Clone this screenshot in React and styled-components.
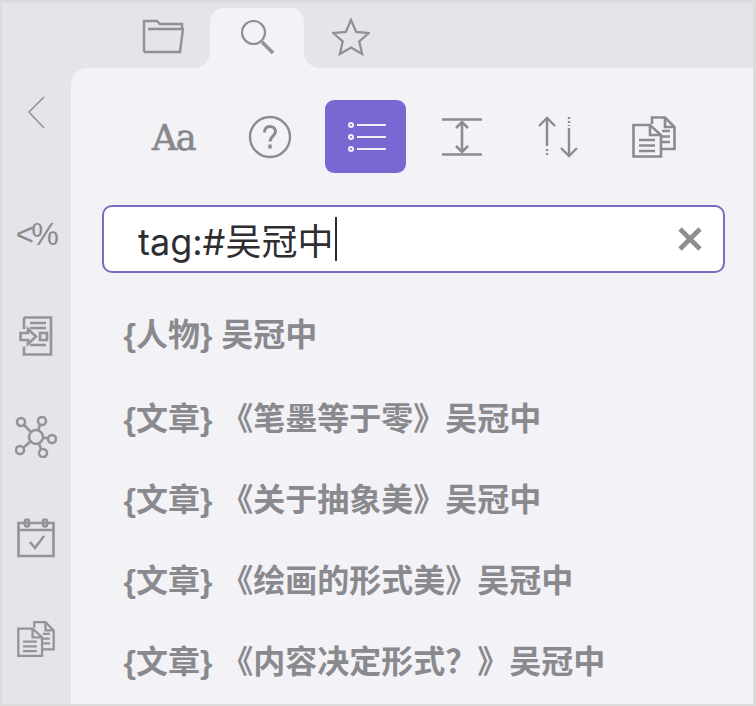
import React from 'react'
import styled, { createGlobalStyle } from 'styled-components'

const results = [
  '{人物} 吴冠中',
  '{文章} 《笔墨等于零》吴冠中',
  '{文章} 《关于抽象美》吴冠中',
  '{文章} 《绘画的形式美》吴冠中',
  '{文章} 《内容决定形式？》吴冠中',
]

function CopyIcon({ width, height }) {
  return (
    <Icon width={width} height={height} viewBox="0 0 44 42" $stroke={2.6}>
      <path d="M20 8V1.500h13l9.500 9.500v22H30" />
      <path d="M33 1.500V11h9.500" />
      <path d="M30 15h8M30 20.500h8M30 26h8" />
      <path d="M1.500 9H18l11 10v21.500H1.500z" />
      <path d="M18 9v10h11" />
      <path d="M7 24h16M7 29.500h16M7 35h16" />
    </Icon>
  )
}

function App() {
  return (
    <>
      <GlobalStyle />
      <Frame>
        <TabBar>
          <Tab>
            <Icon width="42" height="36" viewBox="0 0 42 36" $stroke={2.4}>
              <path d="M2 34V3h13l3 3h22v5" />
              <path d="M2 34h36l3-23H6" />
            </Icon>
          </Tab>
          <Tab $active>
            <Icon width="36" height="38" viewBox="0 0 36 38" $stroke={2.2}>
              <circle cx="14.500" cy="14.500" r="11.500" />
              <path d="M23 24l11 11" strokeWidth="3.600" />
            </Icon>
          </Tab>
          <Tab>
            <Icon width="38" height="38" viewBox="0 0 40 40" $stroke={2.4}>
              <path d="M20 2l5.400 12.600 13.400 1.200-10.100 8.900 3 13.200L20 31l-11.700 6.900 3-13.200L1.200 15.800l13.400-1.200z" />
            </Icon>
          </Tab>
        </TabBar>
        <Main>
          <Side>
            <SideSlot $gapBelow={21}>
              <Icon width="18" height="33" viewBox="0 0 18 33" $stroke={1.600}>
                <path d="M17 1L2 16l15 16" />
              </Icon>
            </SideSlot>
            <SideSlot><Percent>&lt;%</Percent></SideSlot>
            <SideSlot>
              <Icon width="34" height="40" viewBox="0 0 34 40" $stroke={2.600}>
                <path d="M5 1.500h27v37H5v-8M5 1.500V13" />
                <path d="M11 7h16M11 12h16M11 29h16" />
                <path d="M1.500 17H9v-4l8 7.500-8 7.500v-4H1.500z" />
                <rect x="21" y="17" width="7" height="7" />
              </Icon>
            </SideSlot>
            <SideSlot>
              <Icon width="42" height="42" viewBox="0 0 42 42" $stroke={2.600}>
                <circle cx="21" cy="21" r="7" />
                <circle cx="6" cy="6" r="4" />
                <circle cx="27" cy="5" r="4" />
                <circle cx="37" cy="23" r="4" />
                <circle cx="5" cy="34" r="4" />
                <circle cx="28" cy="37" r="4" />
                <path d="M9 9l7 7M25 9l-2 5.500M28 22h5M8.500 31.500l7-6M26 33l-2-5.500" />
              </Icon>
            </SideSlot>
            <SideSlot>
              <Icon width="38" height="40" viewBox="0 0 38 40" $stroke={2.600}>
                <path d="M1.500 5h35v33h-35zM1.500 12h35" />
                <rect x="8" y="1.500" width="4" height="7" rx="2" />
                <rect x="26" y="1.500" width="4" height="7" rx="2" />
                <path d="M13 24l5 6 9-12" />
              </Icon>
            </SideSlot>
            <SideSlot><CopyIcon width="38" height="38" /></SideSlot>
          </Side>
          <Panel>
            <Toolbar>
              <ToolButton><Glyph>Aa</Glyph></ToolButton>
              <ToolButton>
                <Icon width="44" height="44" viewBox="0 0 44 44" $stroke={2.400}>
                  <circle cx="22" cy="22" r="20" />
                  <path d="M16.500 17.500c0-4 2.300-6 5.500-6s5.500 2 5.500 5c0 4.500-5.500 5-5.500 10" strokeWidth="3" />
                  <path d="M22 29.500v4" strokeWidth="3.400" />
                </Icon>
              </ToolButton>
              <ToolButton $active>
                <Icon width="42" height="30" viewBox="0 0 42 30" $stroke={2}>
                  <circle cx="6" cy="3" r="2" />
                  <circle cx="6" cy="15" r="2" />
                  <circle cx="6" cy="27" r="2" />
                  <path d="M12 3h29M12 15h29M12 27h29" />
                </Icon>
              </ToolButton>
              <ToolButton>
                <Icon width="40" height="38" viewBox="0 0 40 38" $stroke={2.600}>
                  <path d="M0 1.500h40M0 36.500h40" />
                  <path d="M20 4v30M14 10l6-6 6 6M14 28l6 6 6-6" />
                </Icon>
              </ToolButton>
              <ToolButton>
                <Icon width="42" height="42" viewBox="0 0 42 42" $stroke={2.400}>
                  <path d="M10 2v28M2 10l8-8 8 8" />
                  <path d="M10 33v8" strokeDasharray="2 2" />
                  <path d="M32 12v28M24 32l8 8 8-8" />
                  <path d="M32 1v9" strokeDasharray="2 2" />
                </Icon>
              </ToolButton>
              <ToolButton><CopyIcon width="44" height="42" /></ToolButton>
            </Toolbar>
            <SearchBox>
              <Query>tag:#吴冠中<Caret /></Query>
              <Icon width="24" height="24" viewBox="0 0 24 24" $stroke={4.600}>
                <path d="M2 2l20 20M22 2L2 22" />
              </Icon>
            </SearchBox>
            <Results>
              {results.map((text) => (
                <ResultRow key={text}>{text}</ResultRow>
              ))}
            </Results>
          </Panel>
        </Main>
      </Frame>
    </>
  )
}

const GlobalStyle = createGlobalStyle`
  html, body {
    margin: 0;
    padding: 0;
    background: #e4e4e9;
  }
`

const Frame = styled.div`
  box-sizing: border-box;
  width: 756px;
  height: 706px;
  display: flex;
  flex-direction: column;
  overflow: hidden;
  background: #e4e4e9;
  border: solid #dcdcdf;
  border-width: 3px 3px 2px 2px;
  font-family: "Liberation Sans", "Noto Sans CJK SC", sans-serif;
`

const TabBar = styled.div`
  display: flex;
  height: 60px;
  margin-top: 5px;
  padding-left: 114px;
  flex: none;
`

const Tab = styled.div`
  position: relative;
  width: 94px;
  display: flex;
  justify-content: center;
  padding-top: 10px;
  box-sizing: border-box;
  color: #919195;
  background: ${(p) => (p.$active ? '#f2f2f7' : 'transparent')};
  border-radius: 14px 14px 0 0;

  ${(p) =>
    p.$active &&
    `
    &::before, &::after {
      content: '';
      position: absolute;
      bottom: 0;
      width: 16px;
      height: 16px;
    }
    &::before {
      left: -16px;
      background: radial-gradient(circle at 0 0, #e4e4e9 15.500px, #f2f2f7 16.500px);
    }
    &::after {
      right: -16px;
      background: radial-gradient(circle at 100% 0, #e4e4e9 15.500px, #f2f2f7 16.500px);
    }
  `}
`

const Main = styled.div`
  flex: 1;
  display: flex;
  min-height: 0;
`

const Side = styled.div`
  box-sizing: border-box;
  width: 69px;
  flex: none;
  display: flex;
  flex-direction: column;
  align-items: center;
  gap: 61.300px;
  padding: 24px 1px 0 0;
  color: #949498;
`

const SideSlot = styled.div`
  height: 40px;
  display: flex;
  align-items: center;
  justify-content: center;
  margin-bottom: ${(p) => p.$gapBelow || 0}px;
`

const Percent = styled.span`
  font-size: 31px;
  line-height: 1;
  letter-spacing: -2.500px;
  color: #8a8a8e;
`

const Panel = styled.div`
  flex: 1;
  min-width: 0;
  background: #f2f2f7;
  border-top-left-radius: 16px;
  padding: 32px 28px 0 31px;
`

const Toolbar = styled.div`
  display: flex;
  gap: 15px;
  padding-left: 31px;
`

const ToolButton = styled.div`
  width: 81px;
  height: 73px;
  flex: none;
  display: flex;
  align-items: center;
  justify-content: center;
  border-radius: 9px;
  color: ${(p) => (p.$active ? '#f2f0fb' : '#8c8c90')};
  background: ${(p) => (p.$active ? '#7967d2' : 'transparent')};
`

const Glyph = styled.span`
  font-family: "DejaVu Serif", serif;
  font-size: 35px;
  font-weight: 400;
  line-height: 1;
  letter-spacing: -1.500px;
  padding-top: 4px;
  color: #88888c;
  -webkit-text-stroke: 0.700px #88888c;
`

const Icon = styled.svg`
  display: block;
  flex: none;
  fill: none;
  stroke: currentColor;
  stroke-width: ${(p) => p.$stroke}px;
`

const SearchBox = styled.div`
  box-sizing: border-box;
  height: 68px;
  margin-top: 32px;
  padding: 0 21px 0 34px;
  display: flex;
  align-items: center;
  justify-content: space-between;
  background: #fff;
  border: 2px solid #7a6cc0;
  border-radius: 10px;
  color: #8e8e92;
`

const Query = styled.div`
  display: flex;
  align-items: center;
  font-family: Inter, "Noto Sans CJK SC", sans-serif;
  font-size: 36px;
  color: #2e2e32;
`

const Caret = styled.span`
  width: 1.500px;
  height: 44px;
  margin-left: 2px;
  background: #2e2e32;
`

const Results = styled.div`
  margin-top: 22px;
  padding-left: 21.500px;
`

const ResultRow = styled.div`
  height: 81px;
  line-height: 81px;
  font-size: 32px;
  font-weight: 700;
  white-space: nowrap;
  color: #8a8a8e;

  &:first-child {
    margin-bottom: 3px;
  }
`

export default App
